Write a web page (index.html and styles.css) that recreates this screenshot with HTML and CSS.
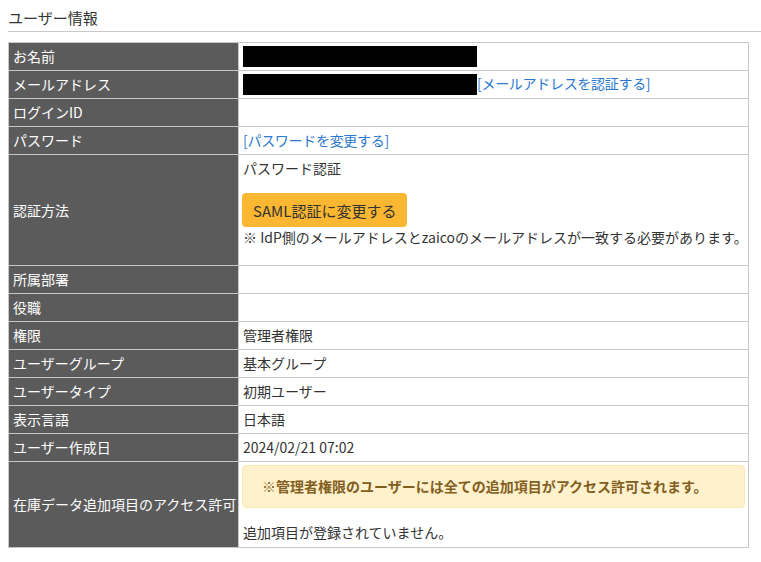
FILE: index.html
```html
<!DOCTYPE html>
<html lang="ja">
<head>
<meta charset="utf-8">
<title>ユーザー情報</title>
<link rel="stylesheet" href="styles.css">
</head>
<body>
<h2 class="title">ユーザー情報</h2>
<table class="info">
  <tr><th>お名前</th><td><span class="redact"></span></td></tr>
  <tr><th>メールアドレス</th><td><span class="redact"></span><a class="link" href="#">[メールアドレスを認証する]</a></td></tr>
  <tr><th>ログインID</th><td></td></tr>
  <tr><th>パスワード</th><td><a class="link" href="#">[パスワードを変更する]</a></td></tr>
  <tr class="auth"><th>認証方法</th><td>
    <div class="auth-cell">
      <div class="line">パスワード認証</div>
      <button class="saml">SAML認証に変更する</button>
      <div class="line note">※ IdP側のメールアドレスとzaicoのメールアドレスが一致する必要があります。</div>
    </div>
  </td></tr>
  <tr><th>所属部署</th><td></td></tr>
  <tr><th>役職</th><td></td></tr>
  <tr><th>権限</th><td>管理者権限</td></tr>
  <tr><th>ユーザーグループ</th><td>基本グループ</td></tr>
  <tr><th>ユーザータイプ</th><td>初期ユーザー</td></tr>
  <tr><th>表示言語</th><td>日本語</td></tr>
  <tr><th>ユーザー作成日</th><td>2024/02/21 07:02</td></tr>
  <tr class="access"><th>在庫データ追加項目のアクセス許可</th><td>
    <div class="access-cell">
      <div class="alert">※管理者権限のユーザーには全ての追加項目がアクセス許可されます。</div>
      <div class="line">追加項目が登録されていません。</div>
    </div>
  </td></tr>
</table>
</body>
</html>
```
FILE: styles.css
```css
html, body {
  margin: 0;
  padding: 0;
  background: #fff;
}
body {
  padding: 0 0 0 8px;
  font-family: "Noto Sans CJK JP", "Noto Sans", sans-serif;
  color: #333;
  font-size: 14px;
}
.title {
  margin: 0 0 10px 0;
  padding: 7px 0 3px 0;
  font-size: 15px;
  font-weight: normal;
  line-height: 21px;
  color: #333;
  border-bottom: 1px solid #c8c8c8;
}
.info {
  border-collapse: collapse;
  width: 741px;
  table-layout: fixed;
}
.info th, .info td {
  border: 1px solid #c8c8c8;
  height: 26px;
  padding: 0 4px 1px 4px;
  font-size: 14px;
  line-height: 20px;
  vertical-align: middle;
  text-align: left;
}
.info th {
  width: 221px;
  background: #5b5b5b;
  color: #fff;
  font-weight: normal;
  white-space: nowrap;
}
.info td {
  color: #333;
  background: #fff;
}
.redact {
  display: inline-block;
  width: 234px;
  height: 21px;
  background: #000;
  vertical-align: middle;
}
.link {
  color: #2a78cf;
  text-decoration: none;
  letter-spacing: -0.3px;
}
.auth-cell {
  padding: 3px 0 17px 0;
}
.line {
  line-height: 20px;
}
.note {
  white-space: nowrap;
}
.saml {
  display: block;
  margin: 15px 0 0 -1px;
  height: 34px;
  padding: 0 11px;
  background: #fbb731;
  border: none;
  border-radius: 4px;
  font-family: "Noto Sans CJK JP", "Noto Sans", sans-serif;
  font-size: 15px;
  color: #333;
}
.access-cell {
  padding: 3px 0 4px 0;
}
.alert {
  margin-left: -1px;
  margin-right: -1px;
  height: 41px;
  padding: 0 19px;
  background: #fff1cc;
  border: 1px solid #fde9b0;
  border-radius: 4px;
  color: #835f1f;
  font-weight: bold;
  font-size: 14px;
  line-height: 41px;
  margin-bottom: 14px;
}
```
